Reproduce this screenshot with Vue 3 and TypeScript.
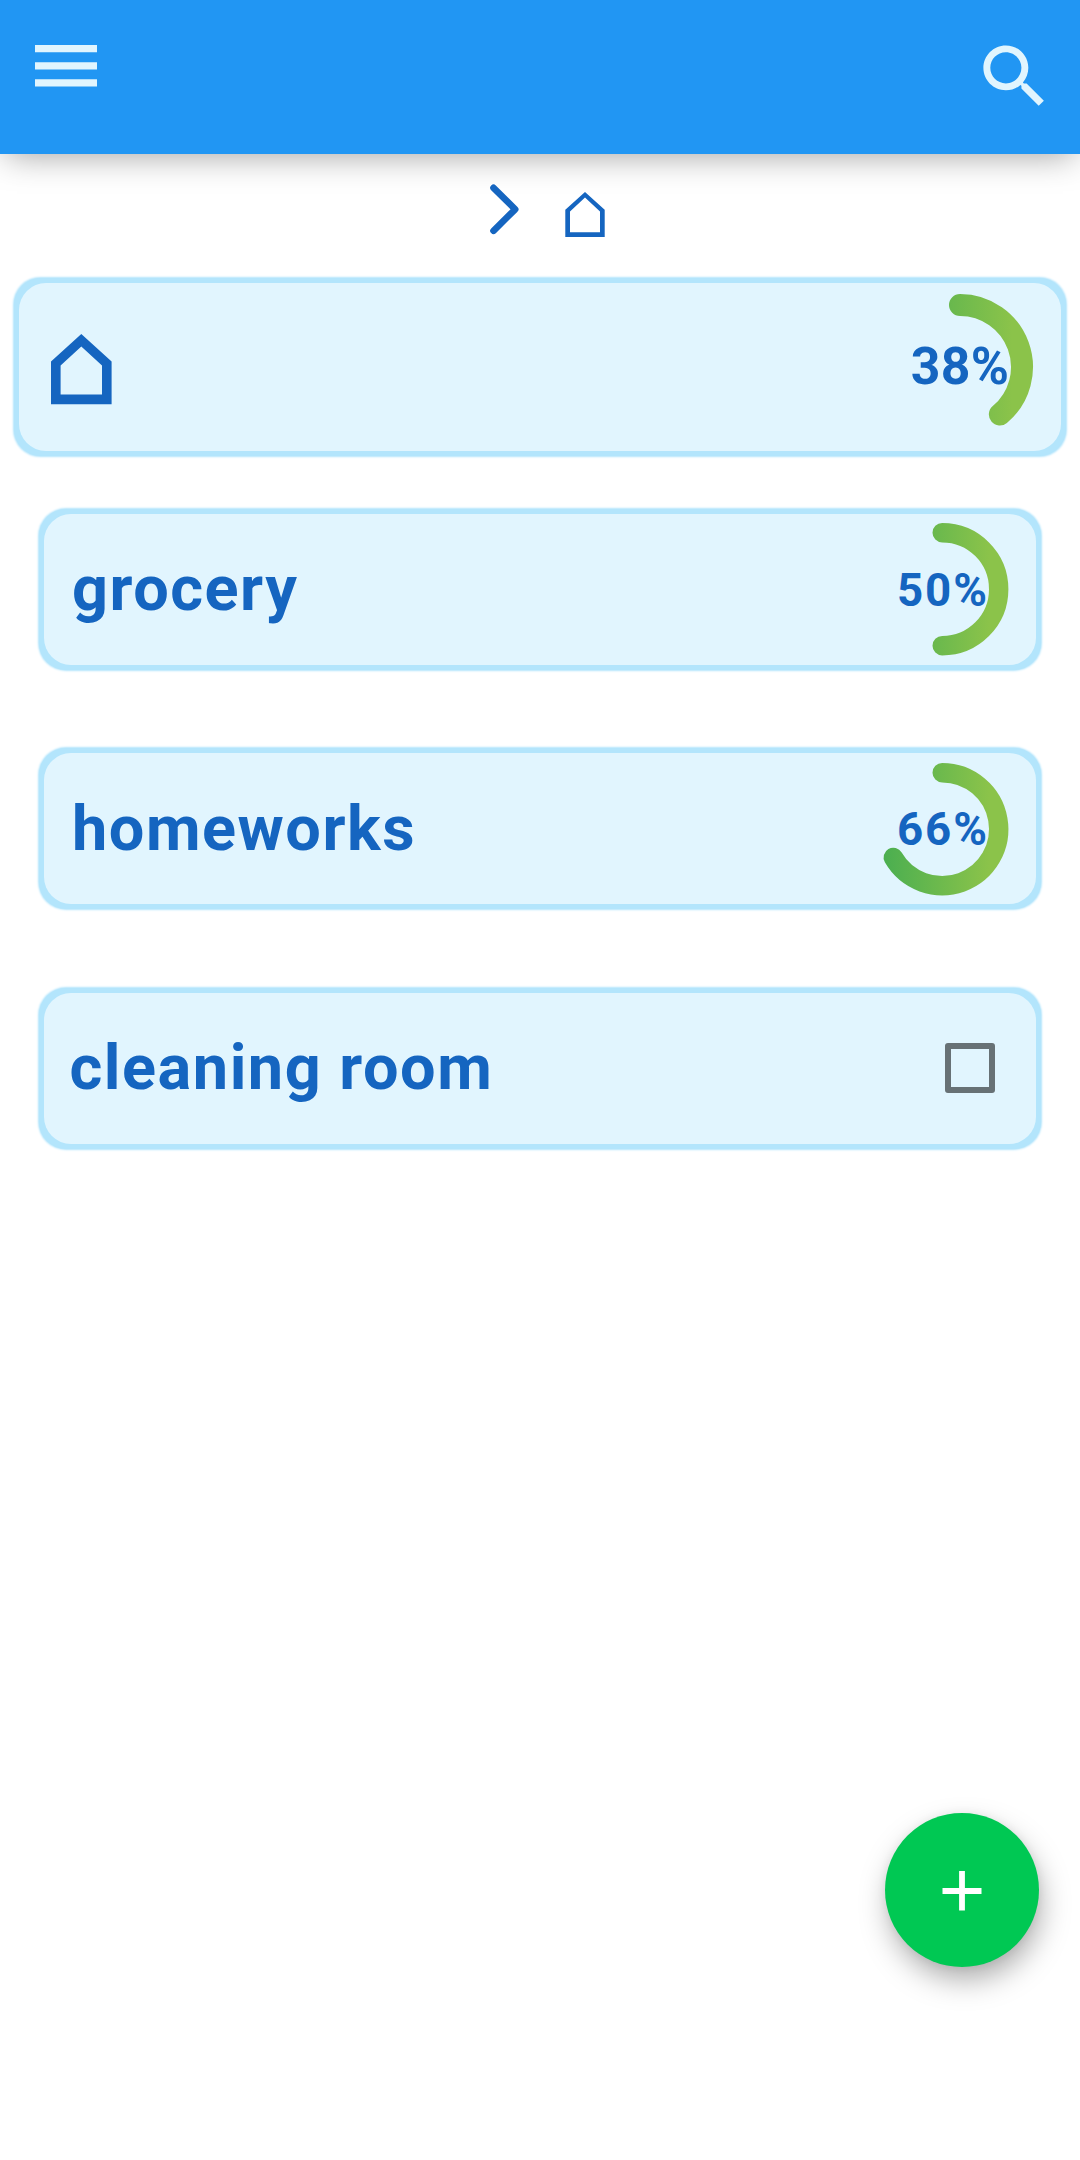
<script setup lang="ts">
interface Task {
  title: string
  progress?: number
  label?: string
}

const tasks: Task[] = [
  { title: 'grocery', progress: 1 / 2, label: '50%' },
  { title: 'homeworks', progress: 2 / 3, label: '66%' },
  { title: 'cleaning room' },
]

function arc(progress: number, radius: number, centre: number): string {
  const angle = progress * Math.PI * 2
  const x = centre + radius * Math.sin(angle)
  const y = centre - radius * Math.cos(angle)
  const large = progress > 0.5 ? 1 : 0
  return `M${centre} ${centre - radius}A${radius} ${radius} 0 ${large} 1 ${x.toFixed(2)} ${y.toFixed(2)}`
}
</script>

<template>
  <div class="screen">
    <header class="bar">
      <svg class="menu" viewBox="0 0 62 42">
        <path d="M0 0h62v7.3H0zM0 17.2h62v7.2H0zM0 34.2h62v7.4H0z" />
      </svg>
      <svg class="search" viewBox="0 0 24 24">
        <path d="M15.5 14h-.79l-.28-.27C15.41 12.59 16 11.11 16 9.5 16 5.91 13.09 3 9.5 3S3 5.91 3 9.5 5.91 16 9.5 16c1.61 0 3.09-.59 4.23-1.57l.27.28v.79l5 4.99L20.49 19l-4.99-5zm-6 0C7.01 14 5 11.99 5 9.5S7.01 5 9.5 5 14 7.01 14 9.5 11.99 14 9.5 14z" />
      </svg>
    </header>

    <nav class="crumbs">
      <svg class="chevron" viewBox="0 0 30 52">
        <path d="M4.5 4.8L26.2 26.3L4.5 47.8" />
      </svg>
      <svg class="crumb-home" viewBox="0 0 40 46">
        <path fill-rule="evenodd" d="M.3 17.8L20 0L39.7 17.8V45H.3zM5 19.6V40.3H35V19.6L20 5.6z" />
      </svg>
    </nav>

    <main>
      <section class="card root">
        <div class="face">
          <svg class="home" viewBox="0 0 61 71">
            <path fill-rule="evenodd" d="M0 27.6L30.3 0L60.6 27.6V70.2H0zM9.6 31.5V60.6H51V31.5L30.3 12.4z" />
          </svg>
          <div class="ring">
            <svg viewBox="0 0 146 146">
              <defs>
                <linearGradient id="g-root" gradientUnits="userSpaceOnUse" x1="11" y1="0" x2="135" y2="0">
                  <stop offset="0" stop-color="#4caf50" />
                  <stop offset="0.92" stop-color="#8bc34a" />
                </linearGradient>
              </defs>
              <path :d="arc(7 / 18, 62, 73)" stroke="url(#g-root)" stroke-width="22" />
            </svg>
            <span>38%</span>
          </div>
        </div>
      </section>

      <section v-for="(task, i) in tasks" :key="task.title" class="card child">
        <div class="face" :class="{ leaf: !task.label, first: i === 0 }">
          <h2>{{ task.title }}</h2>
          <div v-if="task.progress" class="ring">
            <svg viewBox="0 0 132.4 132.4">
              <defs>
                <linearGradient :id="`g-${i}`" gradientUnits="userSpaceOnUse" x1="10" y1="0" x2="122" y2="0">
                  <stop offset="0" stop-color="#4caf50" />
                  <stop offset="0.92" stop-color="#8bc34a" />
                </linearGradient>
              </defs>
              <path :d="arc(task.progress, 56.5, 66.2)" :stroke="`url(#g-${i})`" stroke-width="19.4" />
            </svg>
            <span>{{ task.label }}</span>
          </div>
          <div v-else class="check"></div>
        </div>
      </section>
    </main>

    <button class="fab" aria-label="Add">
      <svg viewBox="0 0 40 40">
        <path d="M17.1 0h5.8v17.1H39.5v5.8H22.9V39.5H17.1V22.9H.5V17.1H17.1z" />
      </svg>
    </button>
  </div>
</template>

<style>
body {
  margin: 0;
  background: #fff;
}
</style>

<style scoped>
.screen {
  position: relative;
  width: 1080px;
  height: 2160px;
  overflow: hidden;
  background: #fff;
  font-family: Roboto, sans-serif;
  font-weight: 700;
  color: #1565c0;
}
svg {
  display: block;
  overflow: visible;
}
.bar {
  display: flex;
  justify-content: space-between;
  align-items: flex-start;
  box-sizing: border-box;
  height: 154px;
  padding: 35px 24.5px 0 35px;
  background: #2196f3;
  box-shadow: 0 7px 32px -6px rgba(0, 0, 0, 0.38);
}
.bar svg {
  fill: #e1f5fe;
}
.menu {
  width: 62px;
  height: 42px;
  margin-top: 10px;
}
.search {
  width: 83px;
  height: 83px;
}
.crumbs {
  display: flex;
  align-items: flex-start;
  box-sizing: border-box;
  height: 124px;
  padding: 29px 0 0 489px;
}
.chevron {
  width: 30px;
  height: 52px;
  fill: none;
  stroke: #1565c0;
  stroke-width: 6.6;
  stroke-linecap: round;
  stroke-linejoin: round;
}
.crumb-home {
  width: 40px;
  height: 46px;
  margin: 9px 0 0 46px;
  fill: #1565c0;
}
.card {
  box-sizing: border-box;
  padding: 5px;
  border-radius: 27px;
  background: #b3e5fc;
  box-shadow: 0 0 2px 1px #b3e5fc;
}
.face {
  display: flex;
  justify-content: space-between;
  align-items: center;
  box-sizing: border-box;
  height: 100%;
  border-radius: 27px;
  background: #e1f5fe;
}
.root {
  height: 178px;
  margin: 0 14px;
  box-shadow: 0 0 2px 0.4px #b3e5fc;
}
.root .face {
  padding: 0 28px 0 32px;
}
.home {
  width: 61px;
  height: 71px;
  margin-top: 4.6px;
  fill: #1565c0;
}
.child {
  height: 161px;
  margin: 53px 39px 78.3px;
}
.child + .child {
  margin-top: 0;
}
.child .face {
  padding: 0 27.3px 0 28px;
}
.child .leaf {
  padding: 0 41px 0 25.5px;
}
h2 {
  margin: 0;
  font-size: 63px;
  line-height: 74px;
  letter-spacing: 1.52px;
  white-space: nowrap;
}
.first h2 {
  margin-bottom: 2px;
}
.ring {
  display: grid;
  place-items: center;
  width: 132.4px;
  height: 132.4px;
  font-size: 45.7px;
  line-height: 54px;
  letter-spacing: 2px;
}
.ring span {
  padding: 2px 0 0 1px;
}
.first .ring span {
  padding-top: 3.4px;
}
.root .ring {
  width: 146px;
  height: 146px;
  font-size: 51.7px;
  line-height: 60px;
  letter-spacing: 0.3px;
}
.root .ring span {
  padding: 0;
}
.ring > * {
  grid-area: 1 / 1;
}
.ring svg {
  width: 100%;
  height: 100%;
  fill: none;
  stroke-linecap: round;
}
.check {
  box-sizing: border-box;
  width: 50px;
  height: 50px;
  border: 6px solid #677175;
  border-radius: 3px;
}
.fab {
  position: absolute;
  right: 41px;
  top: 1813.2px;
  display: grid;
  place-items: center;
  width: 154.2px;
  height: 154.2px;
  padding: 0;
  border: 0;
  border-radius: 50%;
  background: #00c853;
  box-shadow: 3px 14px 30px -2px rgba(0, 0, 0, 0.34), 0 0 10px rgba(0, 0, 0, 0.06);
}
.fab svg {
  width: 40px;
  height: 40px;
  margin-top: 1.4px;
  fill: #fff;
}
</style>
